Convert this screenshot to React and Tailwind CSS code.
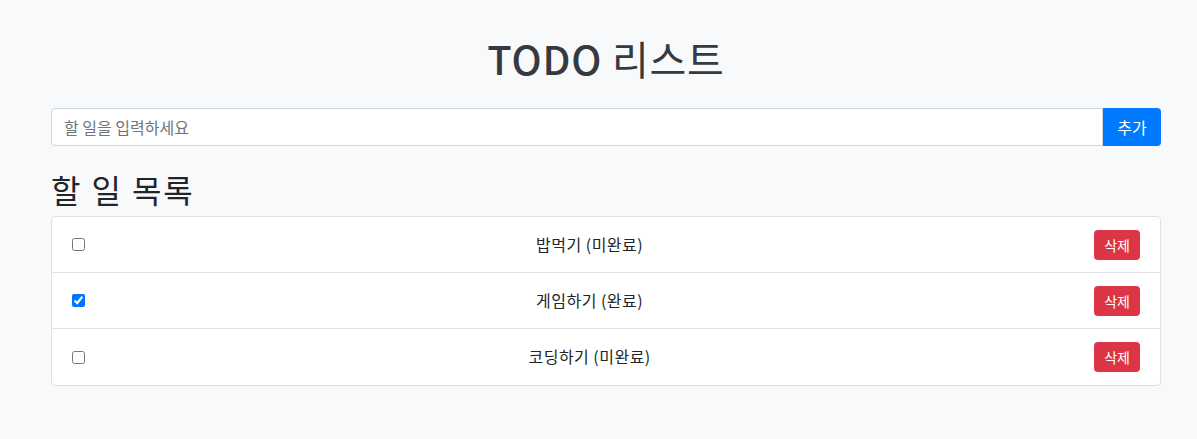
import { useState } from "react";

const initial = [
  { id: 1, text: "밥먹기", done: false },
  { id: 2, text: "게임하기", done: true },
  { id: 3, text: "코딩하기", done: false },
];

function TodoItem({ todo, onToggle, onDelete }) {
  return (
    <li className="flex items-center px-5 py-3 border-b border-[#dee2e6] last:border-b-0 h-14">
      <input
        type="checkbox"
        checked={todo.done}
        onChange={() => onToggle(todo.id)}
        className="w-[13px] h-[13px] accent-[#0075ff]"
      />
      <span className="flex-1 text-center text-[#212529] tracking-[0.03em] -mt-[2px]">
        {todo.text} ({todo.done ? "완료" : "미완료"})
      </span>
      <button
        onClick={() => onDelete(todo.id)}
        className="bg-[#dc3545] text-white text-sm h-[30px] px-[10px] rounded"
      >
        삭제
      </button>
    </li>
  );
}

export default function App() {
  const [todos, setTodos] = useState(initial);
  const [input, setInput] = useState("");

  const add = () => {
    if (!input.trim()) return;
    setTodos([...todos, { id: Date.now(), text: input, done: false }]);
    setInput("");
  };

  return (
    <div
      className="min-h-[439px] bg-[#f8f9fa]"
      style={{ fontFamily: '"Noto Sans CJK KR", "Noto Sans", sans-serif' }}
    >
      <div className="w-[1110px] ml-[51px] pt-[34px]">
        <h1 className="text-center text-[40px] leading-[48px] font-normal text-[#343a40] mb-[26px] tracking-[0.02em]">
          <span className="font-medium">TODO</span> 리스트
        </h1>
        <div className="flex h-[38px]">
          <input
            type="text"
            value={input}
            onChange={(e) => setInput(e.target.value)}
            placeholder="할 일을 입력하세요"
            className="flex-1 bg-white border border-[#ced4da] rounded-l px-3 text-base text-[#495057] placeholder:text-[#6c757d] outline-none"
          />
          <button
            onClick={add}
            className="bg-[#007bff] text-white w-[58px] rounded-r"
          >
            추가
          </button>
        </div>
        <h2 className="text-[32px] leading-[38px] text-[#212529] mt-6 mb-2 tracking-[0.06em]">
          할 일 목록
        </h2>
        <ul className="bg-white border border-[#dee2e6] rounded">
          {todos.map((t) => (
            <TodoItem
              key={t.id}
              todo={t}
              onToggle={(id) =>
                setTodos(todos.map((x) => (x.id === id ? { ...x, done: !x.done } : x)))
              }
              onDelete={(id) => setTodos(todos.filter((x) => x.id !== id))}
            />
          ))}
        </ul>
      </div>
    </div>
  );
}
